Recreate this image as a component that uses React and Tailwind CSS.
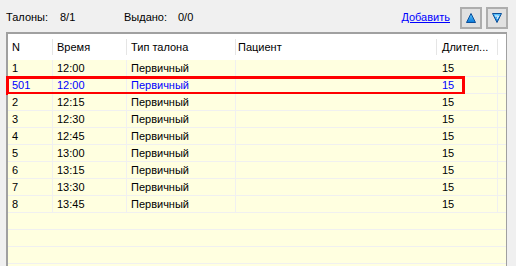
const rows = [
  { n: '1', t: '12:00', type: 'Первичный', d: '15' },
  { n: '501', t: '12:00', type: 'Первичный', d: '15', mark: true },
  { n: '2', t: '12:15', type: 'Первичный', d: '15' },
  { n: '3', t: '12:30', type: 'Первичный', d: '15' },
  { n: '4', t: '12:45', type: 'Первичный', d: '15' },
  { n: '5', t: '13:00', type: 'Первичный', d: '15' },
  { n: '6', t: '13:15', type: 'Первичный', d: '15' },
  { n: '7', t: '13:30', type: 'Первичный', d: '15' },
  { n: '8', t: '13:45', type: 'Первичный', d: '15' },
  {}, {}, {}, {},
];

function UpIcon() {
  return (
    <svg width="10" height="10" viewBox="0 0 10 10">
      <defs>
        <linearGradient id="gu" x1="0" y1="0" x2="0" y2="1">
          <stop offset="0" stopColor="#5fc8ff" />
          <stop offset="1" stopColor="#0a78d8" />
        </linearGradient>
      </defs>
      <path d="M5 0.5 L9.5 9.5 L0.5 9.5 Z" fill="url(#gu)" stroke="#0b4f9a" strokeWidth="1" />
    </svg>
  );
}

function DownIcon() {
  return (
    <svg width="10" height="10" viewBox="0 0 10 10">
      <defs>
        <linearGradient id="gd" x1="0" y1="0" x2="0" y2="1">
          <stop offset="0" stopColor="#5fc8ff" />
          <stop offset="1" stopColor="#0a78d8" />
        </linearGradient>
      </defs>
      <path d="M0.5 0.5 L9.5 0.5 L5 9.5 Z" fill="url(#gd)" stroke="#0b4f9a" strokeWidth="1" />
      <path d="M3 3 L6.5 3 L5 6" fill="none" stroke="#ffffff" strokeWidth="1" />
    </svg>
  );
}

function Cells({ r, header }) {
  const line = header ? 'border-[#e5e5e5]' : 'border-[#f0f0f0]';
  return (
    <>
      <div className={`w-[45px] pl-[4px] border-r ${line}`}>{r.n}</div>
      <div className={`w-[74px] pl-[4px] border-r ${line}`}>{r.t}</div>
      <div className={`w-[109px] pl-[4px] border-r ${line}`}>{r.type}</div>
      <div className={`w-[201px] pl-[2px] border-r ${line}`}>{r.p}</div>
      <div className={`w-[61px] pl-[5px] border-r ${line}`}>{r.d}</div>
      <div className="w-[8px]" />
    </>
  );
}

export default function App() {
  return (
    <div className="w-[516px] h-[266px] overflow-hidden bg-[#f0f0f0] text-[11px] text-black font-['Liberation_Sans',Arial,sans-serif]">
      {/* top bar */}
      <div className="h-[32px] flex items-center pl-[6px] pr-[8px] pt-[3px]">
        <span className="w-[54px]">Талоны:</span>
        <span className="w-[64px]">8/1</span>
        <span className="w-[54px]">Выдано:</span>
        <span>0/0</span>
        <a className="ml-auto mr-[10px] text-[#0000ff] underline">Добавить</a>
        <button className="w-[22px] h-[22px] border-2 border-[#adadad] bg-[#e1e1e1] flex items-center justify-center">
          <UpIcon />
        </button>
        <button className="ml-[4px] w-[22px] h-[22px] border-2 border-[#adadad] bg-[#e1e1e1] flex items-center justify-center">
          <DownIcon />
        </button>
      </div>

      {/* grid */}
      <div className="ml-[6px] w-[501px] border-t-2 border-l-2 border-r border-t-[#a0a0a0] border-l-[#a0a0a0] border-r-[#a0a0a0]">
        <div className="h-[26px] flex items-center bg-white">
          <div className="flex h-full items-center">
            <Cells header r={{ n: 'N', t: 'Время', type: 'Тип талона', p: 'Пациент', d: 'Длител...' }} />
          </div>
        </div>
        {rows.map((r, i) => (
          <div
            key={i}
            className={`relative h-[17px] flex bg-[#ffffe0] border-b border-[#f0f0f0] ${r.mark ? 'text-[#0000ff]' : ''}`}
          >
            <div className="flex items-center pt-[1px]">
              <Cells r={r} />
            </div>
            {r.mark && (
              <div className="absolute left-[-2px] top-[-1px] w-[459px] h-[19px] border-[3px] border-[#ff0000]" />
            )}
          </div>
        ))}
      </div>
    </div>
  );
}
